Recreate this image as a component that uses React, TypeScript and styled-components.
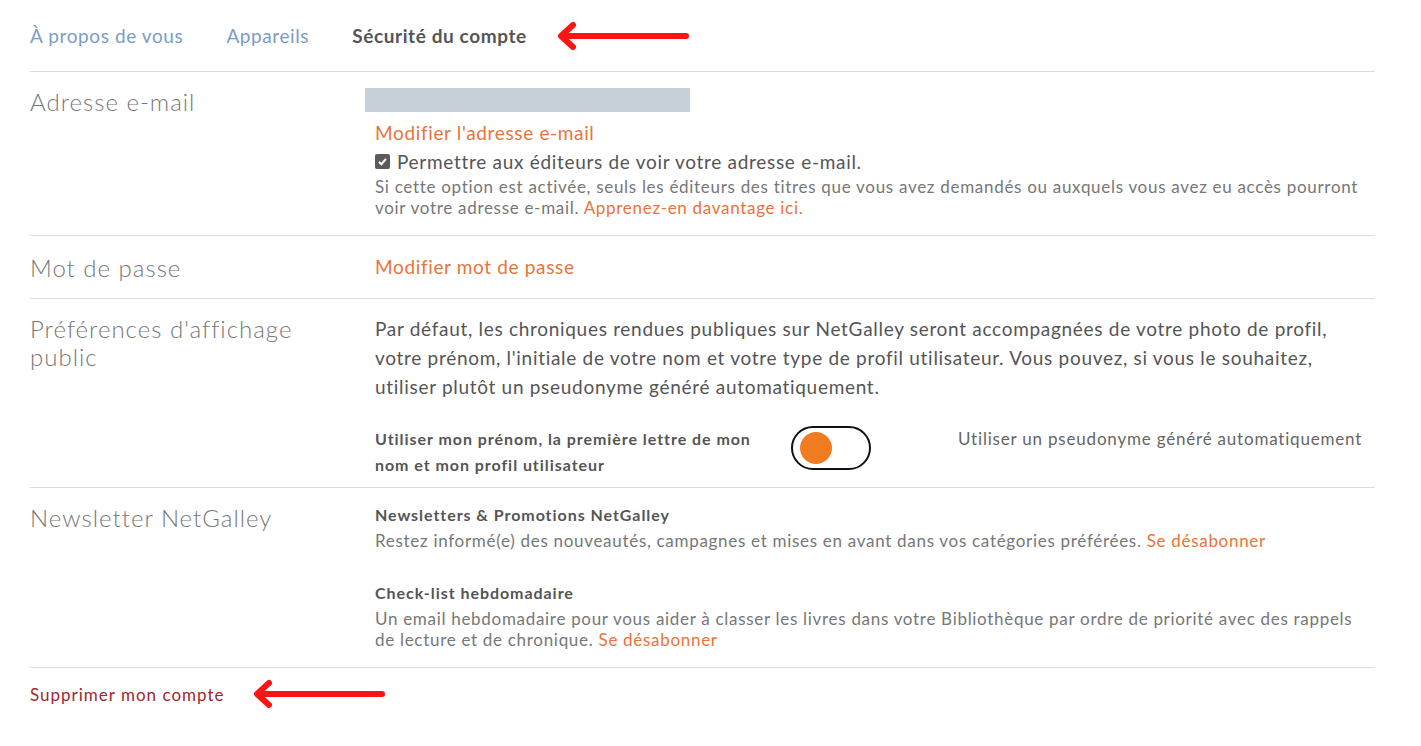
import React from "react";
import styled, { createGlobalStyle } from "styled-components";

const GlobalStyle = createGlobalStyle`
  body {
    margin: 0;
    background: #fff;
    font-family: Lato, "Open Sans", sans-serif;
    color: #555;
  }
`;

const RedArrow = ({ width = 134 }: { width?: number }) => (
  <ArrowSvg width={width} height={30} viewBox={`0 0 ${width} 30`}>
    <path
      d={`M${width - 4} 15 H6 M17 4 L5 15 L17 26`}
      fill="none"
      stroke="#ff1414"
      strokeWidth={6}
      strokeLinecap="round"
      strokeLinejoin="round"
    />
  </ArrowSvg>
);

const CheckMark = () => (
  <svg width="11" height="11" viewBox="0 0 11 11">
    <path d="M2 5.8 L4.4 8.2 L9 2.8" fill="none" stroke="#fff" strokeWidth={2} />
  </svg>
);

export default function App() {
  return (
    <>
      <GlobalStyle />
      <Page>
        <Tabs>
          <Tab>À propos de vous</Tab>
          <Tab>Appareils</Tab>
          <Tab active>Sécurité du compte</Tab>
          <RedArrow />
        </Tabs>

        <Row>
          <Label>Adresse e-mail</Label>
          <Content>
            <EmailMask />
            <Link>Modifier l'adresse e-mail</Link>
            <CheckLine>
              <CheckBox>
                <CheckMark />
              </CheckBox>
              Permettre aux éditeurs de voir votre adresse e-mail.
            </CheckLine>
            <Hint>
              Si cette option est activée, seuls les éditeurs des titres que vous avez demandés ou
              auxquels vous avez eu accès pourront voir votre adresse e-mail.{" "}
              <Link as="span" small>
                Apprenez-en davantage ici.
              </Link>
            </Hint>
          </Content>
        </Row>

        <Row compact>
          <Label>Mot de passe</Label>
          <Content>
            <Link>Modifier mot de passe</Link>
          </Content>
        </Row>

        <Row>
          <Label>Préférences d'affichage public</Label>
          <Content>
            <Paragraph>
              Par défaut, les chroniques rendues publiques sur NetGalley seront accompagnées de votre
              photo de profil, votre prénom, l'initiale de votre nom et votre type de profil
              utilisateur. Vous pouvez, si vous le souhaitez, utiliser plutôt un pseudonyme généré
              automatiquement.
            </Paragraph>
            <ToggleRow>
              <ToggleLabel>
                Utiliser mon prénom, la première lettre de mon nom et mon profil utilisateur
              </ToggleLabel>
              <Toggle>
                <Knob />
              </Toggle>
              <ToggleAlt>Utiliser un pseudonyme généré automatiquement</ToggleAlt>
            </ToggleRow>
          </Content>
        </Row>

        <Row>
          <Label>Newsletter NetGalley</Label>
          <Content>
            <Newsletter>
              <NewsTitle>Newsletters &amp; Promotions NetGalley</NewsTitle>
              <Hint>
                Restez informé(e) des nouveautés, campagnes et mises en avant dans vos catégories
                préférées.{" "}
                <Link as="span" small>
                  Se désabonner
                </Link>
              </Hint>
            </Newsletter>
            <Newsletter>
              <NewsTitle>Check-list hebdomadaire</NewsTitle>
              <Hint>
                Un email hebdomadaire pour vous aider à classer les livres dans votre Bibliothèque
                par ordre de priorité avec des rappels de lecture et de chronique.{" "}
                <Link as="span" small>
                  Se désabonner
                </Link>
              </Hint>
            </Newsletter>
          </Content>
        </Row>

        <Footer>
          <DeleteLink>Supprimer mon compte</DeleteLink>
          <RedArrow />
        </Footer>
      </Page>
    </>
  );
}

const Page = styled.div`
  width: 1345px;
  margin-left: 30px;
`;

const Tabs = styled.nav`
  height: 72px;
  display: flex;
  align-items: center;
  gap: 43px;
  border-bottom: 1px solid #ddd;
  box-sizing: border-box;
`;

const Tab = styled.a<{ active?: boolean }>`
  font-size: 19px;
  letter-spacing: 0.6px;
  font-weight: ${({ active }) => (active ? 700 : 400)};
  color: ${({ active }) => (active ? "#555" : "#7b9dc6")};
  cursor: pointer;
`;

const ArrowSvg = styled.svg`
  display: block;
  margin-left: -14px;
`;

const Row = styled.section<{ compact?: boolean }>`
  display: grid;
  grid-template-columns: 335px 1fr;
  border-bottom: 1px solid #ddd;
  padding: ${({ compact }) => (compact ? "18px 0 16px" : "16px 0 17px")};
`;

const Label = styled.h3`
  margin: 0;
  padding-right: 40px;
  font-size: 24px;
  letter-spacing: 1px;
  font-weight: 300;
  line-height: 28px;
  color: #777;
`;

const Content = styled.div`
  padding-left: 10px;
`;

const EmailMask = styled.div`
  width: 325px;
  height: 24px;
  margin-left: -10px;
  margin-bottom: 8px;
  background: #c8d0da;
`;

const Link = styled.a<{ small?: boolean }>`
  display: ${({ small }) => (small ? "inline" : "block")};
  font-size: ${({ small }) => (small ? "inherit" : "19px")};
  letter-spacing: ${({ small }) => (small ? "inherit" : "0.65px")};
  line-height: ${({ small }) => (small ? "inherit" : "26px")};
  color: #e8743b;
  cursor: pointer;
`;

const CheckLine = styled.label`
  display: flex;
  align-items: center;
  gap: 7px;
  margin-top: 2px;
  font-size: 19px;
  letter-spacing: 0.7px;
  line-height: 28px;
  color: #555;
`;

const CheckBox = styled.span`
  width: 15px;
  height: 15px;
  flex: none;
  border-radius: 2px;
  background: #5b5b5b;
  display: flex;
  align-items: center;
  justify-content: center;
  margin-top: -2px;
`;

const Hint = styled.p`
  margin: 0;
  font-size: 17px;
  letter-spacing: 0.7px;
  line-height: 21px;
  color: #777;
`;

const Paragraph = styled.p`
  margin: -1px 0 0;
  font-size: 19px;
  letter-spacing: 0.7px;
  line-height: 29px;
  color: #555;
`;

const ToggleRow = styled.div`
  display: grid;
  grid-template-columns: 395px 80px 1fr;
  column-gap: 21px;
  align-items: start;
  margin: 25px 0 -8px;
`;

const ToggleLabel = styled.span`
  font-size: 16px;
  letter-spacing: 0.95px;
  font-weight: 700;
  line-height: 26px;
  color: #555;
`;

const Toggle = styled.div`
  width: 80px;
  height: 44px;
  box-sizing: border-box;
  border: 2px solid #111;
  border-radius: 22px;
  display: flex;
  align-items: center;
  padding-left: 7px;
`;

const Knob = styled.span`
  width: 32px;
  height: 32px;
  border-radius: 50%;
  background: #f07c22;
`;

const ToggleAlt = styled.span`
  padding-left: 66px;
  font-size: 17px;
  letter-spacing: 0.8px;
  line-height: 26px;
  color: #666;
`;

const Newsletter = styled.div`
  & + & {
    margin-top: 31px;
  }
`;

const NewsTitle = styled.h4`
  margin: 0 0 4px;
  font-size: 16px;
  letter-spacing: 0.95px;
  font-weight: 700;
  line-height: 22px;
  color: #555;
`;

const Footer = styled.div`
  display: flex;
  align-items: center;
  gap: 41px;
  padding-top: 11px;
`;

const DeleteLink = styled.a`
  font-size: 17px;
  letter-spacing: 1px;
  color: #a3262a;
  cursor: pointer;
`;
